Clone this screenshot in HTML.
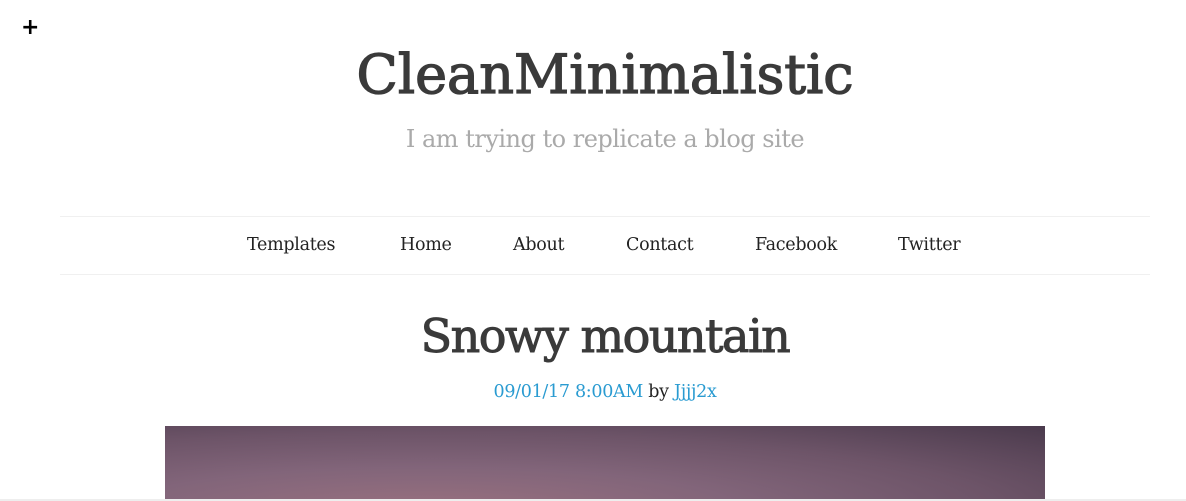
<!DOCTYPE html>
<html><head><style>
body{margin:0;width:1186px;height:501px;overflow:hidden;background:#fff;font-family:"DejaVu Serif","Liberation Serif",serif;position:relative}
.plus{position:absolute;left:21px;top:17px;font:bold 22px "DejaVu Sans",sans-serif;color:#000;line-height:22px}
.c{position:absolute;left:22px;width:1166px;text-align:center;margin:0}
h1{top:40px;font-size:54px;font-weight:normal;color:#3a3a3a;letter-spacing:0px;line-height:70px;-webkit-text-stroke:1.3px #3a3a3a}
.sub{top:122px;font-size:24px;color:#aaa;letter-spacing:-0.5px;line-height:34px}
.nav{position:absolute;top:216px;left:60px;width:1090px;height:57px;border-top:1px solid #f0f0f0;border-bottom:1px solid #f0f0f0}
.nav span{position:absolute;top:18px;font-size:17.5px;color:#222;letter-spacing:-0.3px}
h2{top:305px;font-size:46px;font-weight:normal;color:#3a3a3a;letter-spacing:-1.5px;line-height:62px;-webkit-text-stroke:1px #3a3a3a}
.meta{top:382px;font-size:17.5px;color:#222;letter-spacing:-0.3px}
.meta a{color:#2a9bd1;text-decoration:none}
.img{position:absolute;left:165px;top:426px;width:880px;height:75px;background:radial-gradient(ellipse at 30% 110%,#98707f 0%,#82657a 35%,#6d5468 65%,#4a3a4c 100%)}
.bar{position:absolute;left:0;top:499px;width:1186px;height:2px;background:#eee}
</style></head><body>
<div class="plus">+</div>
<h1 class="c">CleanMinimalistic</h1>
<div class="c sub">I am trying to replicate a blog site</div>
<div class="nav">
<span style="left:187px">Templates</span>
<span style="left:340px">Home</span>
<span style="left:453px">About</span>
<span style="left:566px">Contact</span>
<span style="left:695px">Facebook</span>
<span style="left:838px">Twitter</span>
</div>
<h2 class="c">Snowy mountain</h2>
<div class="c meta"><a>09/01/17 8:00AM</a> by <a>Jjjj2x</a></div>
<div class="img"></div>
<div class="bar"></div>
</body></html>
